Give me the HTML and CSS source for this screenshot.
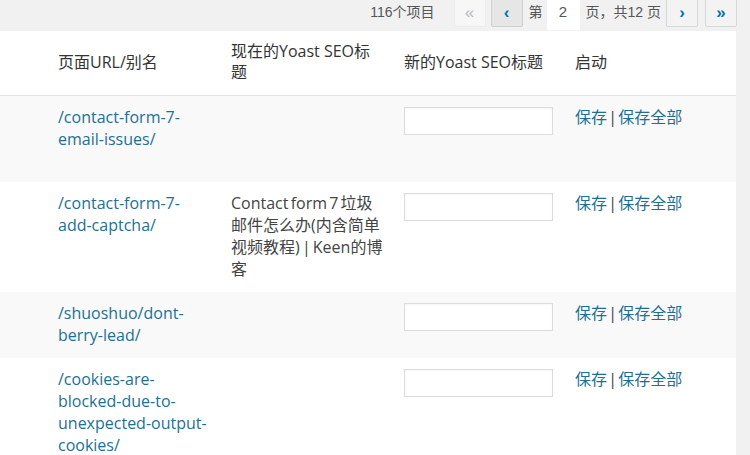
FILE: index.html
```html
<!DOCTYPE html>
<html lang="zh-CN">

<head>
    <meta charset="UTF-8">
    <meta name="viewport" content="width=device-width, initial-scale=1.0">
    <title>Yoast SEO 标题</title>
    <link rel="stylesheet" href="styles.css">
</head>

<body>

    <div class="tablenav">
        <span class="num">116个项目</span>
        <span class="btn disabled">&laquo;</span>
        <span class="btn active">&lsaquo;</span>
        <span class="label">第</span>
        <span class="cur">2</span>
        <span class="label">页，共12 页</span>
        <span class="btn">&rsaquo;</span>
        <span class="btn last">&raquo;</span>
    </div>

    <table class="list">
        <colgroup>
            <col class="c1">
            <col class="c2">
            <col class="c3">
            <col class="c4">
        </colgroup>
        <thead>
            <tr>
                <th class="first">页面URL/别名</th>
                <th class="title">现在的Yoast SEO标题</th>
                <th>新的Yoast SEO标题</th>
                <th>启动</th>
            </tr>
        </thead>
        <tbody>
            <tr class="alt r1">
                <td class="first"><a href="">/contact-form-7-email-issues/</a></td>
                <td class="title"></td>
                <td><input type="text"></td>
                <td class="act"><a href="">保存</a> | <a href="">保存全部</a></td>
            </tr>
            <tr class="r2">
                <td class="first"><a href="">/contact-form-7-add-captcha/</a></td>
                <td class="title">Contact form 7 垃圾邮件怎么办(内含简单视频教程) | Keen的博客</td>
                <td><input type="text"></td>
                <td class="act"><a href="">保存</a> | <a href="">保存全部</a></td>
            </tr>
            <tr class="alt r3">
                <td class="first"><a href="">/shuoshuo/dont-berry-lead/</a></td>
                <td class="title"></td>
                <td><input type="text"></td>
                <td class="act"><a href="">保存</a> | <a href="">保存全部</a></td>
            </tr>
            <tr>
                <td class="first"><a href="">/cookies-are-blocked-due-to-unexpected-output-cookies/</a></td>
                <td class="title"></td>
                <td><input type="text"></td>
                <td class="act"><a href="">保存</a> | <a href="">保存全部</a></td>
            </tr>
        </tbody>
    </table>

</body>

</html>
```

FILE: styles.css
```css
* {
    margin: 0;
    padding: 0;
    box-sizing: border-box;
}

body {
    background: #f1f1f1;
    font-family: "Open Sans", "Noto Sans CJK SC", sans-serif;
    font-size: 16px;
    color: #444;
    overflow: hidden;
}

a {
    color: #1f6f93;
    text-decoration: none;
}

/* 分页 */
.tablenav {
    height: 31px;
    display: flex;
    justify-content: flex-end;
    align-items: flex-start;
    padding-right: 13px;
    font-family: "Liberation Sans", "Noto Sans CJK SC", sans-serif;
    font-size: 14px;
    color: #555;
}

.tablenav .num {
    margin-top: 1px;
    margin-right: 14px;
    line-height: 22px;
}

.tablenav .btn {
    width: 32px;
    height: 31px;
    margin-top: -4px;
    margin-left: 5px;
    padding-top: 4px;
    text-align: center;
    line-height: 23px;
    font-size: 17px;
    font-weight: bold;
    color: #0073aa;
    background: #f3f3f3;
    border: 1px solid #d8d8d8;
    border-radius: 2px;
}

.tablenav .btn.disabled {
    color: #b4b9be;
    font-weight: normal;
    background: #f7f7f7;
    border-color: #ebebeb;
}

.tablenav .btn.active {
    background: #e6e6e6;
    border-color: #cfcfcf;
}

.tablenav .btn.last {
    margin-left: 7px;
}

.tablenav .label {
    line-height: 22px;
    margin-top: 1px;
    margin-left: 6px;
}

.tablenav .cur {
    width: 33px;
    height: 32px;
    margin-top: -2px;
    margin-left: 4px;
    padding-top: 3px;
    text-align: center;
    line-height: 22px;
    font-size: 15px;
    background: #fff;
}

/* 表格 */
.list {
    width: 736px;
    table-layout: fixed;
    border-collapse: collapse;
    background: #fff;
}

.list .c1 { width: 221px; }
.list .c2 { width: 173px; }
.list .c3 { width: 171px; }
.list .c4 { width: 171px; }

.list th {
    height: 64px;
    padding: 0 10px 1px;
    text-align: left;
    font-weight: normal;
    color: #333;
    line-height: 21px;
    vertical-align: middle;
    border-bottom: 1px solid #e3e3e3;
}

.list td {
    padding: 10px 10px 12px;
    line-height: 22px;
    vertical-align: top;
    word-wrap: break-word;
}

.list .first {
    padding-left: 58px;
    padding-right: 10px;
}

.list .title {
    padding-right: 10px;
}

.list td.title {
    word-spacing: -2px;
}

.list td.act {
    word-spacing: -3px;
}

.list .alt td {
    background: #f9f9f9;
}

.list .r1 td {
    height: 87px;
}

.list .r2 td {
    height: 110px;
}

.list .r3 td {
    height: 66px;
}

.list input {
    display: block;
    width: 149px;
    height: 28px;
    margin-top: 1px;
    border: 1px solid #dcdcdc;
    background: #fff;
    box-shadow: inset 0 1px 2px rgba(0, 0, 0, 0.04);
}
```
